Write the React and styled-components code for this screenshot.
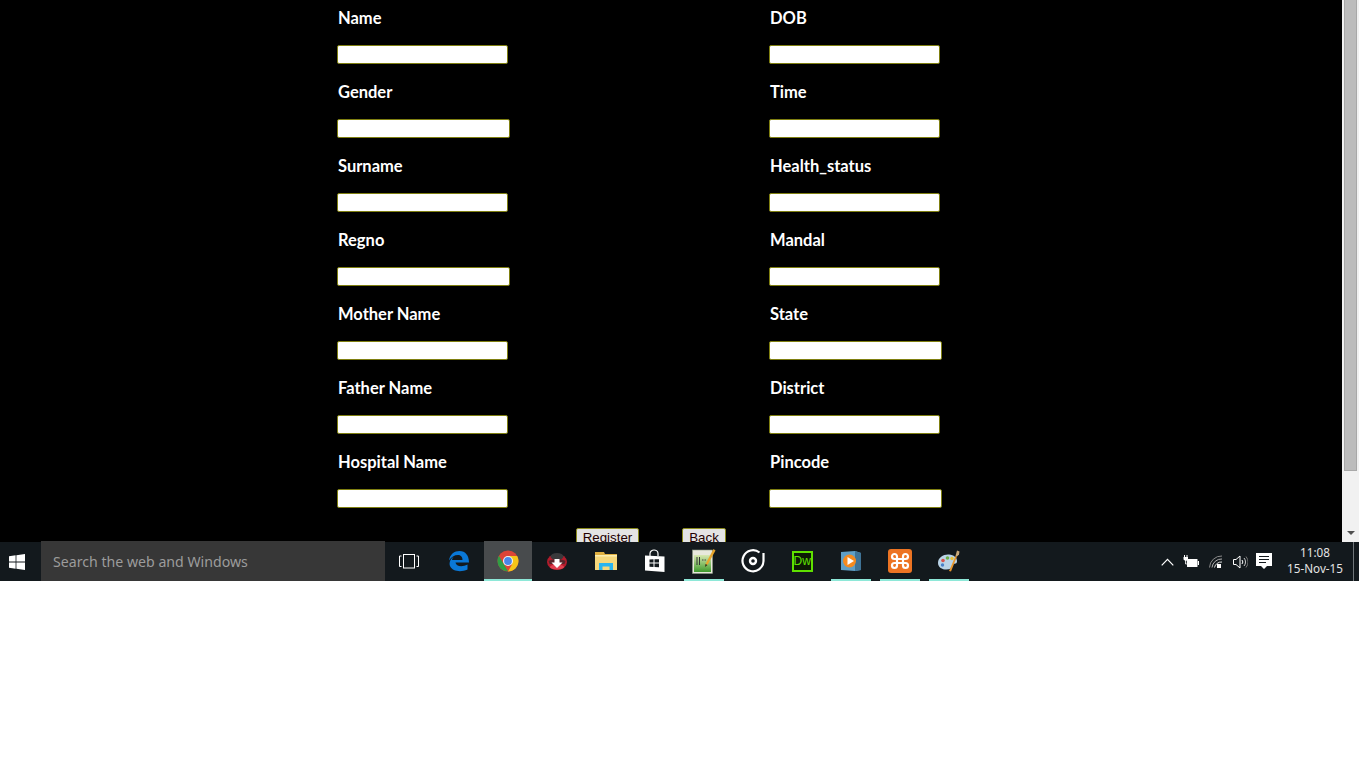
import React from "react"
import styled, { createGlobalStyle } from "styled-components"

const Global = createGlobalStyle`
  html, body { margin: 0; padding: 0; background: #fff; overflow: hidden; }
`

const Screen = styled.div`
  width: 1359px;
  display: flex;
  flex-direction: column;
`

const Viewport = styled.div`
  height: 542px;
  display: flex;
  overflow: hidden;
`

const Page = styled.div`
  flex: 1;
  background: #000;
  padding: 8px 0 0 337px;
  overflow: hidden;
`

const FormGrid = styled.div`
  display: grid;
  grid-template-columns: 432px 432px;
  row-gap: 18px;
`

const Field = styled.div`
  display: flex;
  flex-direction: column;
  align-items: flex-start;
`

const Label = styled.label`
  height: 20px;
  line-height: 20px;
  margin: 0 0 17px 1px;
  color: #fff;
  font-family: "Comic Sans MS", Lato, sans-serif;
  font-size: 16.5px;
  font-weight: 700;
`

const Input = styled.input`
  box-sizing: border-box;
  width: ${({ $wide }) => ($wide ? "173px" : "171px")};
  height: 19px;
  padding: 0;
  background: #fff;
  border: 1px solid #7f7f10;
  border-radius: 2px;
`

const Actions = styled.div`
  display: flex;
  margin: 20px 0 0 239px;
  gap: 43px;
`

const Button = styled.button`
  box-sizing: border-box;
  width: ${({ $w }) => $w}px;
  height: 21px;
  padding: 0 0 2px;
  background: #e4e4e4;
  border: 1px solid #8a8a1c;
  border-radius: 2px;
  color: #200;
  font-family: "Liberation Sans", sans-serif;
  font-size: 13.33px;
`

const Scrollbar = styled.div`
  width: 17px;
  background: #f1f1f1;
  display: flex;
  flex-direction: column;
  align-items: center;
`

const Thumb = styled.div`
  box-sizing: border-box;
  width: 13px;
  height: 471px;
  background: #bcbcbc;
  border: 1px solid #a8a8a8;
  border-top: 0;
`

const ArrowDown = styled.div`
  margin-top: auto;
  margin-bottom: 7px;
  width: 0;
  height: 0;
  border-left: 4px solid transparent;
  border-right: 4px solid transparent;
  border-top: 4px solid #505050;
`

const Taskbar = styled.div`
  height: 39px;
  background: #13191d;
  display: flex;
  align-items: stretch;
`

const StartButton = styled.div`
  width: 41px;
  display: flex;
  align-items: center;
  justify-content: center;
  padding-right: 8px;
  box-sizing: border-box;
`

const SearchBox = styled.div`
  width: 344px;
  height: 40px;
  margin-top: -1px;
  box-sizing: border-box;
  padding-left: 12px;
  background: #373737;
  color: #9c9c9c;
  font-family: "Noto Sans", sans-serif;
  font-size: 14.15px;
  line-height: 41px;
`

const TaskView = styled.div`
  box-sizing: border-box;
  width: 50px;
  padding-right: 2px;
  display: flex;
  align-items: center;
  justify-content: center;
`

const Apps = styled.div`
  display: flex;
  gap: 1px;
`

const AppButton = styled.div`
  position: relative;
  width: 48px;
  height: 40px;
  margin-top: -1px;
  display: flex;
  align-items: center;
  justify-content: center;
  background: ${({ $active }) => ($active ? "#484b4d" : "transparent")};
`

const Underline = styled.div`
  position: absolute;
  bottom: 0;
  left: ${({ $active }) => ($active ? "0" : "4px")};
  right: ${({ $active }) => ($active ? "0" : "4px")};
  height: 2px;
  background: #8ee8d8;
`

const Tray = styled.div`
  margin-left: auto;
  display: flex;
  align-items: center;
`

const TraySlot = styled.div`
  width: ${({ $w }) => $w}px;
  display: flex;
  justify-content: center;
`

const Clock = styled.div`
  width: 66px;
  margin-left: 5px;
  padding-bottom: 4px;
  color: #e4e4e4;
  font-family: "Noto Sans", sans-serif;
  font-size: 11.7px;
  line-height: 16px;
  text-align: center;
`

const ShowDesktop = styled.div`
  width: 5px;
  margin-left: 5px;
  align-self: stretch;
  border-left: 1px solid #70767a;
`

const DwBox = styled.div`
  box-sizing: border-box;
  width: 21px;
  height: 21px;
  border: 2px solid #5fe000;
  background: #0c1a05;
  color: #5fe000;
  font-family: "Liberation Sans", sans-serif;
  font-size: 12px;
  line-height: 16px;
  text-align: center;
`

const WinLogo = () => (
  <svg width="16" height="16" viewBox="0 0 16 16" fill="#fff">
    <path d="M0 2.3 6.6 1.3v6.2H0zM7.4 1.2 16 0v7.5H7.4zM0 8.4h6.6v6.3L0 13.7zM7.4 8.4H16V16l-8.6-1.2z" />
  </svg>
)

const TaskViewIcon = () => (
  <svg width="20" height="15" viewBox="0 0 20 15" fill="none" stroke="#fff" strokeWidth="1">
    <rect x="4.5" y="0.5" width="11" height="13.5" />
    <path d="M2.5 2H.5v10.5h2M17.5 2h2v10.5h-2" />
  </svg>
)

const EdgeIcon = () => (
  <svg width="22" height="22" viewBox="0 0 22 22">
    <path
      fill="#0a78d7"
      d="M1 10.5C2 4 6.5 1 11.5 1 17.500 1 21 5.500 21 12.500H7.500c.3 3.800 6.500 5 12 2v5c-6.500 3-15 2-17.500-3.500C.8 13 2 9 6 6.500c-1 1-1.700 2-2 3.500h10.500C14.500 6.500 12.500 5 10 5 6.500 5 3 7 1 10.500z"
    />
  </svg>
)

const ChromeIcon = () => (
  <svg width="22" height="22" viewBox="0 0 22 22">
    <circle cx="11" cy="11" r="10.500" fill="#dc4437" />
    <path d="M1.900 5.700 7 14.500l4 6.800C5.200 21.500.5 16.800.5 11c0-2 .5-3.700 1.400-5.300z" fill="#2f9e44" />
    <path d="M11 6h9.100c.9 1.500 1.400 3.200 1.400 5 0 5.800-4.700 10.500-10.500 10.500L15 14.500z" fill="#f5c518" />
    <circle cx="11" cy="11" r="5" fill="#f4f4f4" />
    <circle cx="11" cy="11" r="3.900" fill="#4a86e8" />
  </svg>
)

const RedeemIcon = () => (
  <svg width="22" height="22" viewBox="0 0 22 22">
    <ellipse cx="11" cy="12" rx="10" ry="8" fill="#b21c2c" />
    <ellipse cx="11" cy="6.500" rx="6.500" ry="3.500" fill="#3a3a3c" />
    <path d="M2.500 11c3-2.500 14-2.500 17 0l-1 3h-15z" fill="#58242a" />
    <ellipse cx="11" cy="17" rx="7" ry="2.500" fill="#e04050" />
    <path d="M8.500 9h5v3.500h3L11 18l-5.500-5.500h3z" fill="#fff" />
  </svg>
)

const ExplorerIcon = () => (
  <svg width="22" height="20" viewBox="0 0 22 20">
    <path d="M0 1h9l1 2h12v2H0z" fill="#e0b040" />
    <rect y="4" width="22" height="15" fill="#f6d77a" />
    <path d="M0 4h22v1.500H0z" fill="#fdeeb0" />
    <path d="M4 19v-7h14v7h-3.500v-3.500h-7V19z" fill="#2ab4ee" />
  </svg>
)

const StoreIcon = () => (
  <svg width="22" height="24" viewBox="0 0 22 24">
    <path d="M6 7V4.500C6 2.500 8 1 10 1s4 1.500 4 3.500V7" fill="none" stroke="#fff" strokeWidth="1.200" />
    <path d="M1 6.500 20.500 7.500V23L1 21.500z" fill="#fff" />
    <path d="M5.500 10.500 9.500 10.300V13.500H5.500zM10.500 10.300 15 10.200V13.500H10.500zM5.500 14.500H9.500V18L5.500 17.700zM10.500 14.500H15V18.300L10.500 18z" fill="#13191d" />
  </svg>
)

const NotepadIcon = () => (
  <svg width="24" height="26" viewBox="0 0 24 26">
    <defs>
      <linearGradient id="pad" x1="0" y1="0" x2="0" y2="1">
        <stop offset="0" stopColor="#d8e8b0" />
        <stop offset="1" stopColor="#3f9a2c" />
      </linearGradient>
    </defs>
    <rect x="0.500" y="2" width="20" height="23.500" fill="#e8e8dc" stroke="#8c9a84" strokeWidth="0.6" />
    <rect x="2" y="7" width="17" height="17" fill="url(#pad)" />
    <path d="M5 9v8M7.500 9v8" stroke="#333" strokeWidth="1" />
    <path d="M10 12h1.500M12.500 12h1.500" stroke="#444" strokeWidth="1" />
    <path d="M21.500 1 23.500 2.500 15.500 17 13.500 16z" fill="#e8a52c" />
    <path d="M13.500 16 15.500 17 13 19z" fill="#3a2a10" />
  </svg>
)

const GrooveIcon = () => (
  <svg width="26" height="26" viewBox="0 0 26 26" fill="none">
    <path d="M19.500 4.500A10.500 10.500 0 1 0 23.500 13V5" stroke="#fff" strokeWidth="2.200" />
    <circle cx="13" cy="13" r="3" stroke="#fff" strokeWidth="2.400" />
  </svg>
)

const MediaIcon = () => (
  <svg width="22" height="22" viewBox="0 0 22 22">
    <path d="M1 2 15 1l6 2v17l-6 1-14-1z" fill="#5f9fc6" />
    <path d="M15 1l6 2v17l-6 1z" fill="#3f7396" />
    <circle cx="9.500" cy="11" r="6.500" fill="#f58a1f" />
    <path d="M7.500 7l6.500 4-6.500 4z" fill="#fff" />
  </svg>
)

const XamppIcon = () => (
  <svg width="24" height="24" viewBox="0 0 24 24">
    <rect width="24" height="24" rx="3" fill="#ed7423" />
    <path
      d="M9 9.500V7.500a2.500 2.500 0 1 0-2.500 2.500H17.500a2.500 2.500 0 1 0-2.500-2.500v9a2.500 2.500 0 1 0 2.500-2.500H6.500a2.500 2.500 0 1 0 2.500 2.500z"
      fill="none"
      stroke="#fff"
      strokeWidth="2.200"
    />
  </svg>
)

const PaintIcon = () => (
  <svg width="24" height="24" viewBox="0 0 24 24">
    <path d="M1 14C1 8 7 5 12 5.500c5 .5 8 3 8 6.500 0 3-2 2.500-3.500 3-1.500.5-.5 3-2.500 4.500C9 22 1 20 1 14z" fill="#b9d3e6" />
    <circle cx="6" cy="11.500" r="1.800" fill="#d8524a" />
    <circle cx="10.500" cy="9" r="1.800" fill="#6db04a" />
    <circle cx="15" cy="9.500" r="1.700" fill="#e8c23a" />
    <circle cx="5.500" cy="16" r="1.700" fill="#4a82c8" />
    <path d="M12 22 18.500 7 20 7.500 14 22.500z" fill="#e8962c" />
    <path d="M18.500 7 20 1.500l2.500 1-.5 3L20 7.500z" fill="#c9a878" />
  </svg>
)

const ChevronIcon = () => (
  <svg width="13" height="8" viewBox="0 0 13 8" fill="none" stroke="#fff" strokeWidth="1.200">
    <path d="M.7 7.300 6.500 1.300l5.800 6" />
  </svg>
)

const BatteryIcon = () => (
  <svg width="16" height="13" viewBox="0 0 16 13" fill="#fff">
    <path d="M1.500 0v2M4 0v2" stroke="#fff" strokeWidth="1" fill="none" />
    <path d="M.5 2h4.500v2.500L3.200 6H2.300L.5 4.500z" />
    <path d="M2.700 6v3h1" stroke="#fff" strokeWidth="1" fill="none" />
    <rect x="4" y="4" width="10.500" height="8" rx="0.500" />
    <rect x="14.800" y="6" width="1.200" height="4" />
  </svg>
)

const WifiIcon = () => (
  <svg width="14" height="13" viewBox="0 0 14 13" fill="none" stroke="#8a8a8a" strokeWidth="1">
    <path d="M.5 12.500A12 12 0 0 1 13 1" />
    <path d="M3 12.500A9.500 9.500 0 0 1 13 4" stroke="#b0b0b0" />
    <path d="M5.500 12.500A7 7 0 0 1 13 7" stroke="#ddd" />
    <rect x="8" y="9" width="4" height="4" fill="#fff" stroke="none" />
  </svg>
)

const VolumeIcon = () => (
  <svg width="15" height="14" viewBox="0 0 15 14" fill="none" stroke="#fff" strokeWidth="1">
    <path d="M.5 4.500H3L7 1v12L3 9.500H.5z" />
    <path d="M9 5a3 3 0 0 1 0 4" />
    <path d="M11 3a6 6 0 0 1 0 8" stroke="#ccc" />
    <path d="M13 1.500a9 9 0 0 1 0 11" stroke="#777" />
  </svg>
)

const ActionIcon = () => (
  <svg width="16" height="17" viewBox="0 0 16 17">
    <path d="M0 0h16v13h-5l-3 3-3-3H0z" fill="#fff" />
    <path d="M3 3.500h10M3 6.500h10M3 9.500h7" stroke="#13191d" strokeWidth="1.200" />
  </svg>
)

const fields = [
  ["Name", false, "DOB", false],
  ["Gender", true, "Time", false],
  ["Surname", false, "Health_status", false],
  ["Regno", true, "Mandal", false],
  ["Mother Name", false, "State", true],
  ["Father Name", false, "District", false],
  ["Hospital Name", false, "Pincode", true],
]

const apps = [
  { icon: <EdgeIcon /> },
  { icon: <ChromeIcon />, active: true },
  { icon: <RedeemIcon /> },
  { icon: <ExplorerIcon /> },
  { icon: <StoreIcon /> },
  { icon: <NotepadIcon />, open: true },
  { icon: <GrooveIcon /> },
  { icon: <DwBox>Dw</DwBox> },
  { icon: <MediaIcon />, open: true },
  { icon: <XamppIcon />, open: true },
  { icon: <PaintIcon />, open: true },
]

export default function App() {
  return (
    <Screen>
      <Global />
      <Viewport>
        <Page>
          <FormGrid>
            {fields.flatMap(([left, leftWide, right, rightWide]) => [
              <Field key={left}>
                <Label>{left}</Label>
                <Input $wide={leftWide} />
              </Field>,
              <Field key={right}>
                <Label>{right}</Label>
                <Input $wide={rightWide} />
              </Field>,
            ])}
          </FormGrid>
          <Actions>
            <Button $w={63}>Register</Button>
            <Button $w={44}>Back</Button>
          </Actions>
        </Page>
        <Scrollbar>
          <Thumb />
          <ArrowDown />
        </Scrollbar>
      </Viewport>
      <Taskbar>
        <StartButton>
          <WinLogo />
        </StartButton>
        <SearchBox>Search the web and Windows</SearchBox>
        <TaskView>
          <TaskViewIcon />
        </TaskView>
        <Apps>
          {apps.map((app, i) => (
            <AppButton key={i} $active={app.active}>
              {app.icon}
              {(app.active || app.open) && <Underline $active={app.active} />}
            </AppButton>
          ))}
        </Apps>
        <Tray>
          <TraySlot $w={24}><ChevronIcon /></TraySlot>
          <TraySlot $w={24}><BatteryIcon /></TraySlot>
          <TraySlot $w={26}><WifiIcon /></TraySlot>
          <TraySlot $w={22}><VolumeIcon /></TraySlot>
          <TraySlot $w={26}><ActionIcon /></TraySlot>
          <Clock>
            11:08
            <br />
            15-Nov-15
          </Clock>
          <ShowDesktop />
        </Tray>
      </Taskbar>
    </Screen>
  )
}
